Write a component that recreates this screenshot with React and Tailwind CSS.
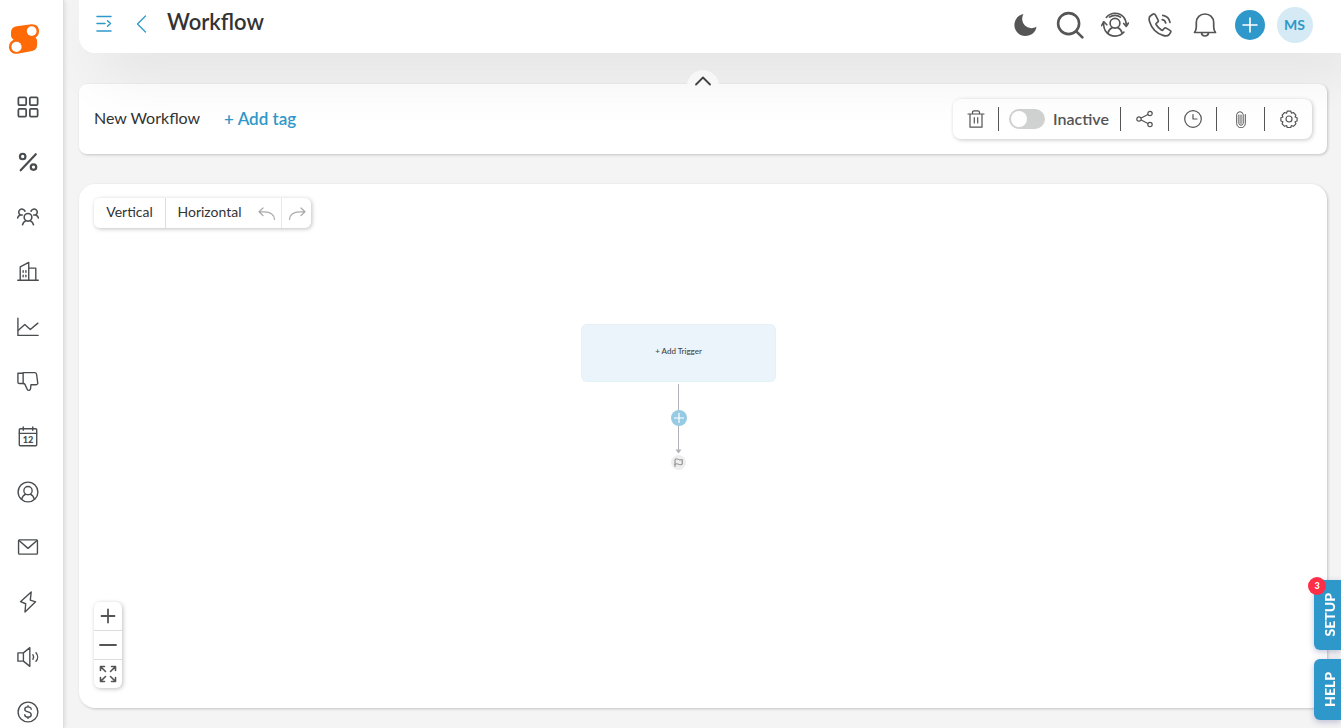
import { useState } from 'react'

function Icon({ size = 22, box = 24, stroke = 1.5, className = '', children }) {
  return (
    <svg
      width={size}
      height={size}
      viewBox={`0 0 ${box} ${box}`}
      fill="none"
      stroke="currentColor"
      strokeWidth={stroke}
      strokeLinecap="round"
      strokeLinejoin="round"
      className={className}
      aria-hidden="true"
    >
      {children}
    </svg>
  )
}

const navItems = [
  {
    label: 'Dashboard',
    stroke: 1.9,
    icon: (
      <>
        <rect x="1.5" y="1.5" width="8.5" height="8.5" rx="1.2" />
        <rect x="14" y="1.5" width="8.5" height="8.5" rx="1.2" />
        <rect x="1.5" y="14" width="8.5" height="8.5" rx="1.2" />
        <rect x="14" y="14" width="8.5" height="8.5" rx="1.2" />
      </>
    )
  },
  {
    label: 'Deals',
    stroke: 2.4,
    icon: (
      <>
        <circle cx="6.2" cy="6" r="3" />
        <circle cx="18" cy="17.5" r="3" />
        <path d="M20.500 3.500 4 21" />
      </>
    )
  },
  {
    label: 'Contacts',
    stroke: 1.7,
    icon: (
      <>
        <circle cx="12" cy="12.300" r="4.200" />
        <path d="M6 20.500c.6-2.400 2-3.800 3.700-4.500M18 20.500c-.6-2.400-2-3.800-3.700-4.500" />
        <path d="M8.700 5.600A3.500 3.500 0 1 0 3.600 9.800M3.600 9.800C2 10.500.9 11.500.7 13M3.600 9.800h2.200" />
        <path d="M15.300 5.600a3.500 3.500 0 1 1 5.100 4.200M20.400 9.800c1.600.7 2.700 1.700 2.900 3.200M20.400 9.800h-2.200" />
      </>
    )
  },
  {
    label: 'Companies',
    icon: (
      <>
        <path d="M.8 21h22.400M3.500 21V6.500l9.300-5V21M12.800 7.800h7.700V21" />
        <path d="M6.700 10.500v1.800M9.700 10.500v1.800M6.700 15.500v1.800M9.700 15.500v1.800" />
      </>
    )
  },
  {
    label: 'Reports',
    icon: (
      <>
        <path d="M1 2.500v18.700h22" />
        <path d="m1.500 15.500 7-6.300 6 5.600 8.300-7" />
      </>
    )
  },
  {
    label: 'Lost deals',
    icon: (
      <>
        <path d="M1 2.500h5.700v11.200H2.500A1.500 1.500 0 0 1 1 12.200z" />
        <path d="M6.700 1.800h12.500c1.300 0 2 .7 2.200 2l1.200 9c.2 1.300-.5 2.200-1.800 2.200h-5.600l-.4 4.200c-.2 2.100-2.800 2.700-3.700.7l-2.300-5c-.4-.8-1.200-1.200-2.100-1.200" />
      </>
    )
  },
  {
    label: 'Calendar',
    icon: (
      <>
        <rect x="2.500" y="3" width="19" height="18.500" rx="1" />
        <path d="M2.500 8h19M6.800 1v3.700M17.200 1v3.700" />
        <text
          x="12"
          y="18.800"
          textAnchor="middle"
          fill="currentColor"
          stroke="none"
          className="font-[Lato] text-[10px] font-black"
        >
          12
        </text>
      </>
    )
  },
  {
    label: 'Profile',
    icon: (
      <>
        <circle cx="12" cy="12" r="10.800" />
        <circle cx="12" cy="10.500" r="4.500" />
        <path d="M5 20c.8-3 2.300-4.700 4.700-5.600M19 20c-.8-3-2.300-4.700-4.700-5.600" />
      </>
    )
  },
  {
    label: 'Email',
    icon: (
      <>
        <rect x="1.700" y="4.200" width="20.600" height="15.600" rx="1" />
        <path d="m2.200 4.800 9.800 8.700 9.800-8.700" />
      </>
    )
  },
  {
    label: 'Automation',
    icon: <path d="M15.500 1 3.800 11.700l5.700 2.200L8.700 23l11.600-11.200-5.800-1.900z" />
  },
  {
    label: 'Campaigns',
    icon: (
      <>
        <path d="M1 7.500h6v9H1zM7 7.500l7-5.700v20.400l-7-5.700" />
        <path d="M17.300 9.500c1 1.500 1 3.500 0 5M20.700 7.300c2.400 2.700 2.400 6.700 0 9.400" />
      </>
    )
  },
  {
    label: 'Payments',
    icon: (
      <>
        <circle cx="12" cy="12" r="10.800" />
        <path d="M15.500 9c0-1.600-1.500-2.600-3.500-2.600S8.500 7.400 8.500 9s1.300 2.400 3.500 2.900 3.500 1.400 3.500 3-1.500 2.700-3.500 2.700-3.500-1.100-3.500-2.700M12 5v1.400M12 17.600V19" />
      </>
    )
  }
]

function Sidebar() {
  return (
    <aside className="z-30 w-16 shrink-0 border-r border-[#dedede] bg-white shadow-[1px_0_4px_rgba(0,0,0,0.1)]">
      <a href="#home" aria-label="Home" className="ml-2 mt-6 block w-8">
        <svg width="32" height="31" viewBox="0 0 32 31">
          <path
            fill="#ff6a06"
            d="M8.500 2.300 23.500.2C28 0 31 2.800 31 6.800c0 3.200-1 5.300-3.400 6.700 1 1.200 1.600 2.400 1.500 4.300V21c0 3.300-1.800 5.600-5 6L9.500 29.800c-4.700.5-8.500-2.500-8.500-6.900 0-3.500 1.800-5.700 4.700-7.200C4 14.600 3 13 3 11V8.500c0-3.500 2-5.700 5.500-6.200z"
          />
          <circle cx="23.700" cy="7.100" r="4.900" fill="#fff" />
          <circle cx="8.500" cy="22.800" r="5.100" fill="#fff" />
        </svg>
      </a>
      <nav className="mt-6">
        {navItems.map((item) => (
          <a
            key={item.label}
            href="#nav"
            aria-label={item.label}
            className="flex h-[55px] w-14 items-center justify-center text-[#4a4d4f]"
          >
            <Icon stroke={item.stroke}>{item.icon}</Icon>
          </a>
        ))}
      </nav>
    </aside>
  )
}

const headerActions = [
  {
    label: 'Dark mode',
    size: 24,
    icon: <path fill="currentColor" stroke="none" d="M10.500 1a9.300 9.300 0 0 0 12.900 12.700C23 19 18 23 12.300 23A11 11 0 0 1 1.400 12C1.400 6.500 5 2 10.500 1z" />
  },
  {
    label: 'Search',
    size: 28,
    stroke: 2.2,
    icon: (
      <>
        <circle cx="10.800" cy="10.800" r="9" />
        <path d="m17.600 17.600 5 5" />
      </>
    )
  },
  {
    label: 'Switch user',
    size: 28,
    stroke: 1.4,
    icon: (
      <>
        <circle cx="12" cy="10.500" r="4.200" />
        <path d="M5.800 19c.8-2.500 2.200-4 4-4.800M18.200 19c-.8-2.500-2.200-4-4-4.800" />
        <path d="M4.500 5.500C8.500.8 15.500.8 19.300 5.200c1.500 1.700 2.400 4 2.400 7.300M2.300 9.500c-.6 7.500 4 12 9.700 12 3.500 0 6-1.200 7.700-3.400" />
        <path d="m.5 12.500 1.900-3.300 2.600 2.600M19.400 10.700l2.300 2.500 1.800-2.900M7.300 5.200C10 3.200 14 3.200 16.700 5.200" />
      </>
    )
  },
  {
    label: 'Calls',
    size: 24,
    stroke: 1.7,
    icon: (
      <>
        <path d="M4.800 1.200 2.300 3c-1.500 1.300-1.400 3.600-.6 6 2 6.300 6.900 11.300 13.300 13.400 2.600.8 4.700.7 6.100-.8l1.400-2.100c.5-.8.3-1.600-.5-2.100l-3.700-2.300c-.8-.5-1.600-.3-2.200.4l-1 1.200c-.5.6-1.100.7-1.700.3a17 17 0 0 1-5.200-5.200c-.4-.6-.3-1.300.3-1.700l1.200-1c.7-.6.8-1.400.3-2.200L7.500 2.100C6.900 1 5.800.6 4.800 1.200z" />
        <path d="M14.200 6.600c1.900.3 3.100 1.500 3.500 3.400M14.800 2.300c4.200.7 6.500 3 7.200 7.100" />
      </>
    )
  },
  {
    label: 'Notifications',
    size: 24,
    stroke: 1.7,
    icon: (
      <path d="M1.500 19.500h21c-1.200-1.600-1.800-3-1.800-5.500V9.700c0-5-3.700-8.700-8.700-8.700S3.300 4.700 3.300 9.700V14c0 2.500-.6 3.900-1.800 5.500zM8.500 19.700c.2 4.400 6.800 4.400 7 0" />
    )
  }
]

function Header() {
  return (
    <header className="relative z-20 ml-[15px] flex h-[53px] shrink-0 items-center justify-between rounded-bl-2xl bg-white pb-1.5 pl-4 pr-6 shadow-[20px_20px_60px_0_rgba(0,0,0,0.08)]">
      <div className="flex items-center">
        <button type="button" aria-label="Expand menu" className="text-[#2f98ca]">
          <Icon size={18} box={18} stroke={1.5}>
            <path d="M2 1.500h14M2 8.500h8M2 16h14M12.500 5.800l3 2.700-3 2.700" />
          </Icon>
        </button>
        <button type="button" aria-label="Back" className="ml-5 text-[#2f98ca]">
          <Icon size={18} box={18} stroke={1.3}>
            <path d="m12.500 1-8 8 8 8" />
          </Icon>
        </button>
        <h1 className="ml-4 pb-1 text-[22px] leading-6 font-semibold text-[#333]">Workflow</h1>
      </div>
      <div className="flex items-center pt-0.5 text-[#555]">
        {headerActions.map((action) => (
          <button
            key={action.label}
            type="button"
            aria-label={action.label}
            className="flex w-[45px] justify-center"
          >
            <Icon size={action.size} stroke={action.stroke}>
              {action.icon}
            </Icon>
          </button>
        ))}
        <div className="flex w-[45px] justify-center">
          <button
            type="button"
            aria-label="Create"
            className="flex size-[30px] items-center justify-center rounded-full bg-[#2f98ca] text-white"
          >
            <Icon size={16} box={16} stroke={1.6}>
              <path d="M8 1v14M1 8h14" />
            </Icon>
          </button>
        </div>
        <div className="flex w-[45px] justify-center">
          <button
            type="button"
            className="size-9 rounded-full bg-[#d5eaf4] text-sm font-bold text-[#2f98ca]"
          >
            MS
          </button>
        </div>
      </div>
    </header>
  )
}

const tools = [
  {
    label: 'Share',
    icon: (
      <>
        <circle cx="3" cy="9" r="2.200" />
        <circle cx="14" cy="3.500" r="2.200" />
        <circle cx="14" cy="14.500" r="2.200" />
        <path d="m5.200 8 6.700-3.500M5.200 10l6.700 3.500" />
      </>
    )
  },
  {
    label: 'History',
    icon: (
      <>
        <circle cx="9" cy="9" r="8.300" />
        <path d="M9 4.500V9h4" />
      </>
    )
  },
  {
    label: 'Attachments',
    icon: (
      <path
        strokeWidth="1"
        d="M13.300 4.500v9a4.300 4.300 0 0 1-8.600 0v-9a3.300 3.300 0 0 1 6.500 0v9a2.200 2.200 0 0 1-4.300 0V5M9 5v8.500"
      />
    )
  },
  {
    label: 'Settings',
    icon: (
      <>
        <circle cx="9" cy="9" r="3" />
        <path d="M7.200 1.200h3.600l.6 2 2-.7 2.500 2.600-.8 1.900 2 .8v3.200l-2 .8.8 2-2.500 2.500-2-.8-.7 2.200H7.300l-.7-2.200-2 .8-2.500-2.500.8-2-2-.8V7.800l2-.8-.8-1.900 2.500-2.600 2 .7z" />
      </>
    )
  }
]

function Divider() {
  return <span className="h-6 w-px bg-[#555]" />
}

function WorkflowBar() {
  const [active, setActive] = useState(false)

  return (
    <section className="relative mt-[31px] flex h-[70px] shrink-0 items-center justify-between rounded-lg bg-white px-[15px] shadow-[1px_1px_3px_rgba(0,0,0,0.2)]">
      <button
        type="button"
        aria-label="Collapse"
        className="absolute -top-3.5 left-1/2 flex h-7 w-8 -translate-x-1/2 justify-center rounded-t-full bg-white pt-0.5 text-[#444]"
      >
        <Icon size={18} box={18} stroke={1.8}>
          <path d="m2 12.500 7-7 7 7" />
        </Icon>
      </button>
      <div className="flex items-center gap-6">
        <span className="pb-0.5 text-base leading-6 text-[#333]">New Workflow</span>
        <button type="button" className="text-[17px] leading-6 font-semibold text-[#2f98ca]">
          + Add tag
        </button>
      </div>
      <div className="flex h-10 items-center rounded-lg text-[#555] shadow-[1px_1px_4px_rgba(0,0,0,0.22)]">
        <button type="button" aria-label="Delete" className="flex w-[45px] justify-center">
          <Icon size={18} box={18} stroke={1.2}>
            <path d="M1 4h16M3 4v13.200h12V4M5.500 4V2.500c0-1 .7-1.700 1.700-1.700h3.600c1 0 1.700.7 1.700 1.700V4M7.300 7.500v5.500M10.700 7.500v5.500" />
          </Icon>
        </button>
        <Divider />
        <label className="flex items-center gap-2 px-2.5">
          <input
            type="checkbox"
            checked={active}
            onChange={(e) => setActive(e.target.checked)}
            className="h-5 w-9 appearance-none rounded-full bg-[#d0d2d2] before:ml-0.5 before:mt-0.5 before:block before:size-4 before:rounded-full before:bg-white checked:bg-[#2f98ca] checked:before:ml-[18px]"
          />
          <span className="w-[57px] text-base leading-6 font-semibold">
            {active ? 'Active' : 'Inactive'}
          </span>
        </label>
        {tools.map((tool) => (
          <div key={tool.label} className="flex items-center">
            <Divider />
            <button type="button" aria-label={tool.label} className="flex w-[47px] justify-center">
              <Icon size={18} box={18} stroke={1.2}>
                {tool.icon}
              </Icon>
            </button>
          </div>
        ))}
      </div>
    </section>
  )
}

function Canvas() {
  return (
    <section className="relative mt-[30px] mb-5 flex min-h-0 flex-1 flex-col items-start justify-between rounded-2xl bg-white px-[15px] pt-3.5 pb-5 shadow-[1px_1px_3px_rgba(0,0,0,0.2)]">
      <div className="flex h-[30px] items-stretch rounded-md text-sm text-[#333] shadow-[1px_1px_4px_rgba(0,0,0,0.25)]">
        <button type="button" className="w-[72px] border-r border-[#ddd] pb-0.5">
          Vertical
        </button>
        <button type="button" className="w-[87px] pb-0.5">
          Horizontal
        </button>
        <button
          type="button"
          aria-label="Undo"
          className="flex w-[29px] items-center justify-center border-r border-[#e8e8e8] pt-1 text-[#aaa]"
        >
          <Icon size={18} box={18} stroke={1.2}>
            <path d="M5 2 1 5.800l4 3.700M1.500 5.800h5C12.500 5.800 16.500 9 16.500 13.500" />
          </Icon>
        </button>
        <button
          type="button"
          aria-label="Redo"
          className="flex w-[29px] items-center justify-center pt-1 text-[#aaa]"
        >
          <Icon size={18} box={18} stroke={1.2}>
            <path d="m13 2 4 3.800-4 3.700M16.500 5.800h-5c-6 0-10 3.200-10 7.700" />
          </Icon>
        </button>
      </div>

      {/* flow nodes */}
      <div className="absolute top-[140px] left-[502px] flex w-[195px] flex-col items-center">
        <button
          type="button"
          className="h-[58px] w-full rounded-md border border-dotted border-[#dcf0f2] bg-[#eaf4fa] pb-1 text-[8px] font-medium text-[#444]"
        >
          + Add Trigger
        </button>
        <span className="mt-0.5 h-[26px] w-px bg-[#b1b1b7]" />
        <button
          type="button"
          aria-label="Add step"
          className="flex size-4 items-center justify-center rounded-full bg-[#97cbe4] text-white"
        >
          <Icon size={10} box={10} stroke={1.2}>
            <path d="M5 .5v9M.5 5h9" />
          </Icon>
        </button>
        <svg width="7" height="28" viewBox="0 0 7 28" className="text-[#b1b1b7]" aria-hidden="true">
          <path d="M3 0h1v24H3zM.5 23.500h6l-3 4z" fill="currentColor" />
        </svg>
        <span className="mt-px flex size-[15px] items-center justify-center rounded-full bg-[#eee] text-[#777]">
          <Icon size={9} box={9} stroke={0.9}>
            <path d="M1 8.500v-7c1.200-.8 2.200-.8 3.500 0s2.300.3 3.700 0v4.800c-1.400.5-2.400.6-3.700 0s-2.300-.7-3.500 0" />
          </Icon>
        </span>
      </div>

      <div className="w-7 divide-y divide-[#ddd] rounded-md text-[#555] shadow-[1px_1px_4px_rgba(0,0,0,0.25)]">
        <button type="button" aria-label="Zoom in" className="flex h-[29px] w-full items-center justify-center">
          <Icon size={18} box={18} stroke={1.8}>
            <path d="M9 2.500v13M2.500 9h13" />
          </Icon>
        </button>
        <button type="button" aria-label="Zoom out" className="flex h-[29px] w-full items-center justify-center">
          <Icon size={18} box={18} stroke={1.8}>
            <path d="M1 9h16" />
          </Icon>
        </button>
        <button type="button" aria-label="Fit view" className="flex h-7 w-full items-center justify-center">
          <Icon size={18} box={18} stroke={1.6}>
            <path d="M5.500 1.500h-4v4M1.500 1.500l5 5M12.500 1.500h4v4M16.500 1.500l-5 5M5.500 16.500h-4v-4M1.500 16.500l5-5M12.500 16.500h4v-4M16.500 16.500l-5-5" />
          </Icon>
        </button>
      </div>
    </section>
  )
}

function SideTabs() {
  return (
    <div className="fixed right-0 bottom-2 z-40 flex w-[27px] flex-col gap-[9px] text-sm font-black text-white">
      <button
        type="button"
        className="relative flex h-[70px] items-center justify-center rounded-l-md bg-[#2f98ca] pl-1 shadow-[0_2px_6px_rgba(60,60,140,0.3)]"
      >
        <span className="rotate-180 [writing-mode:vertical-rl]">SETUP</span>
        <span className="absolute -top-[3px] -left-1.5 flex size-[18px] items-center justify-center rounded-full bg-[#ff2d46] text-[9px]">
          3
        </span>
      </button>
      <button
        type="button"
        className="flex h-[61px] items-center justify-center rounded-l-md bg-[#2f98ca] pl-1 shadow-[0_2px_6px_rgba(60,60,140,0.3)]"
      >
        <span className="rotate-180 [writing-mode:vertical-rl]">HELP</span>
      </button>
    </div>
  )
}

export default function App() {
  return (
    <div className="flex h-screen overflow-hidden bg-[#f4f4f4] font-[Lato,'Open_Sans',sans-serif]">
      <Sidebar />
      <div className="flex min-w-0 flex-1 flex-col">
        <Header />
        <main className="flex min-h-0 flex-1 flex-col pr-3.5 pl-[15px]">
          <WorkflowBar />
          <Canvas />
        </main>
      </div>
      <SideTabs />
    </div>
  )
}
